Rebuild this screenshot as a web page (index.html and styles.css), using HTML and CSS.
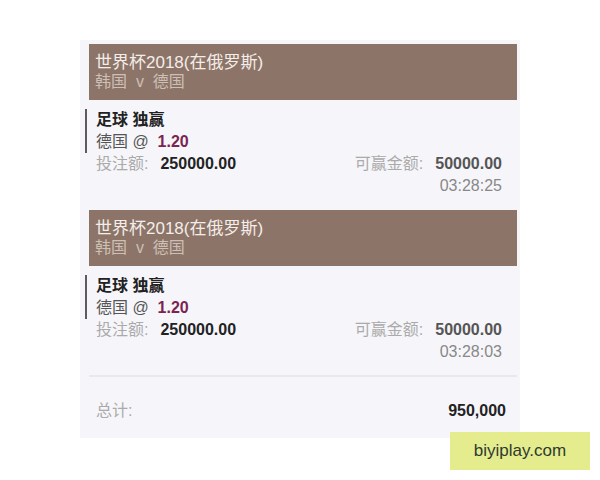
FILE: index.html
```html
<!DOCTYPE html>
<html lang="zh-CN">
<head>
<meta charset="UTF-8">
<title>投注单</title>
<link rel="stylesheet" href="styles.css">
</head>
<body>
<div class="slip">
    <div class="bet">
        <div class="bet-head">
            <div class="league">世界杯2018(在俄罗斯)</div>
            <div class="match">韩国 &nbsp;v &nbsp;德国</div>
        </div>
        <div class="bet-body">
            <div class="pick">
                <div class="market">足球 独赢</div>
                <div class="selection">德国 @ &nbsp;<span class="odds">1.20</span></div>
            </div>
            <div class="row">
                <div><span class="label">投注额:</span><span class="stake">250000.00</span></div>
                <div><span class="label">可赢金额:</span><span class="win">50000.00</span></div>
            </div>
            <div class="time">03:28:25</div>
        </div>
    </div>
    <div class="bet">
        <div class="bet-head">
            <div class="league">世界杯2018(在俄罗斯)</div>
            <div class="match">韩国 &nbsp;v &nbsp;德国</div>
        </div>
        <div class="bet-body">
            <div class="pick">
                <div class="market">足球 独赢</div>
                <div class="selection">德国 @ &nbsp;<span class="odds">1.20</span></div>
            </div>
            <div class="row">
                <div><span class="label">投注额:</span><span class="stake">250000.00</span></div>
                <div><span class="label">可赢金额:</span><span class="win">50000.00</span></div>
            </div>
            <div class="time">03:28:03</div>
        </div>
    </div>
    <div class="total">
        <span class="label">总计:</span>
        <span class="total-value">950,000</span>
    </div>
</div>
<div class="watermark">biyiplay.com</div>
</body>
</html>
```

FILE: styles.css
```css
body {
    margin: 0;
    padding: 40px 0 0 80px;
    background: #fff;
    font-family: "Liberation Sans", "Noto Sans CJK SC", sans-serif;
    font-size: 16px;
}
.slip {
    width: 428px;
    height: 394px;
    padding: 4px 3px 0 9px;
    background: #f6f6fa;
}
.bet {
    height: 166px;
}
.bet-head {
    height: 56px;
    box-sizing: border-box;
    padding: 9px 6px 0;
    background: #8c7568;
    font-size: 17px;
    line-height: 19px;
}
.league {
    color: #f4ede9;
}
.match {
    color: #cdbfb6;
    font-size: 16px;
}
.bet-body {
    padding: 9px 15px 0 0;
    line-height: 22px;
}
.pick {
    margin-left: -4px;
    padding-left: 9px;
    border-left: 2px solid #5c5c5c;
}
.market {
    font-weight: bold;
    color: #222;
}
.selection {
    color: #555;
}
.odds {
    font-weight: bold;
    color: #7b2452;
}
.row {
    display: flex;
    justify-content: space-between;
    padding-left: 7px;
}
.label {
    color: #aaa;
    margin-right: 12px;
}
.stake {
    font-weight: bold;
    color: #222;
}
.win {
    font-weight: bold;
    color: #555;
}
.time {
    text-align: right;
    color: #888;
}
.total {
    display: flex;
    justify-content: space-between;
    margin-top: -1px;
    padding: 23px 11px 0 7px;
    border-top: 2px solid #e8e8ee;
    line-height: 22px;
}
.total-value {
    font-weight: bold;
    color: #222;
}
.watermark {
    position: absolute;
    left: 450px;
    top: 432px;
    width: 140px;
    height: 38px;
    background: #e4ec8e;
    color: #2e3a30;
    font-size: 17px;
    line-height: 38px;
    text-align: center;
}
```
